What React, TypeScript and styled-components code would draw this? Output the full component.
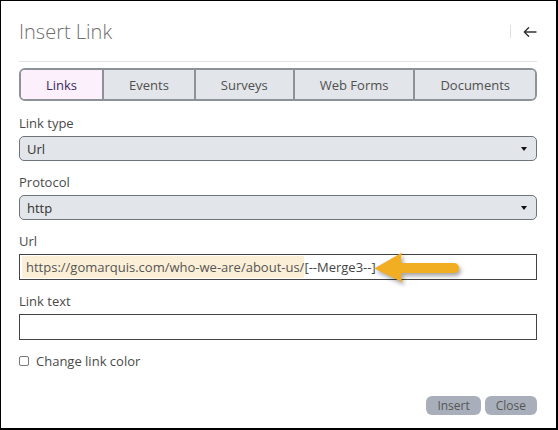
import React from "react";
import styled, { createGlobalStyle } from "styled-components";

const Global = createGlobalStyle`
  html, body { margin: 0; padding: 0; background: #fff; }
  body { font-family: "Open Sans", "Noto Sans", sans-serif; }
  * { box-sizing: border-box; }
`;

const Dialog = styled.div`
  width: 558px;
  height: 430px;
  border: 1px solid #000;
  border-right-width: 2px;
  border-bottom-width: 2px;
  padding: 0 19px 0 18px;
  display: flex;
  flex-direction: column;
  background: #fff;
`;

const Header = styled.div`
  display: flex;
  align-items: center;
  padding: 17px 0 16px;
  border-bottom: 1px solid #e3e3e3;
`;

const Title = styled.h1`
  margin: 0;
  font-size: 20px;
  line-height: 27px;
  font-weight: 300;
  color: #6f6f6f;
`;

const HeaderTools = styled.div`
  margin-left: auto;
  display: flex;
  align-items: center;
`;

const Divider = styled.span`
  width: 1px;
  height: 13px;
  background: #dcdfe5;
  margin-right: 12px;
`;

const BackButton = styled.button`
  border: 0;
  padding: 0;
  background: none;
  display: flex;
  cursor: pointer;
`;

const TabBar = styled.div`
  margin-top: 6px;
  height: 33px;
  display: flex;
  border: 2px solid #8d9299;
  border-radius: 6px;
  overflow: hidden;
`;

const Tab = styled.div<{ $active?: boolean }>`
  flex: 1 1 auto;
  display: flex;
  align-items: center;
  justify-content: center;
  font-size: 13px;
  color: ${(p) => (p.$active ? "#3a2b5c" : "#505050")};
  background: ${(p) => (p.$active ? "#fcf0fc" : "#e2e5e9")};
  & + & {
    border-left: 2px solid #8d9299;
  }
`;

const Field = styled.div<{ $first?: boolean }>`
  margin-top: ${(p) => (p.$first ? "13px" : "12px")};
  display: flex;
  flex-direction: column;
`;

const Label = styled.label`
  font-size: 13px;
  line-height: 18px;
  color: #4a4a4a;
  margin-bottom: 4px;
`;

const SelectBox = styled.div`
  height: 25px;
  border: 1px solid #6e747c;
  border-radius: 5px;
  background: #e2e5e9;
  display: flex;
  align-items: center;
  padding: 0 9px 0 7px;
  font-size: 13px;
  color: #333;
`;

const Caret = styled.span`
  margin-left: auto;
  width: 0;
  height: 0;
  border-left: 3px solid transparent;
  border-right: 3px solid transparent;
  border-top: 4px solid #111;
`;

const TextBox = styled.div`
  position: relative;
  height: 26px;
  border: 1px solid #444;
  display: flex;
  align-items: center;
  padding: 0 2px;
  font-size: 13px;
  color: #444;
  white-space: nowrap;
`;

const Highlight = styled.span`
  display: inline-block;
  height: 22px;
  line-height: 22px;
  padding: 0 0 0 4px;
  background: #fcefd7;
  color: #555;
`;

const MergeTag = styled.span`
  line-height: 22px;
  color: #444;
`;

const Annotation = styled.svg`
  position: absolute;
  left: 351px;
  top: -7px;
  filter: drop-shadow(2px 3px 2px rgba(0, 0, 0, 0.35));
  pointer-events: none;
`;

const CheckRow = styled.label`
  margin-top: 12px;
  display: flex;
  align-items: center;
  font-size: 13px;
  line-height: 18px;
  color: #4a4a4a;
`;

const CheckBox = styled.span`
  width: 10px;
  height: 10px;
  border: 1px solid #7a7a7a;
  border-radius: 2px;
  margin-right: 7px;
  background: #fff;
`;

const Footer = styled.div`
  margin-top: auto;
  padding-bottom: 13px;
  display: flex;
  justify-content: flex-end;
  gap: 4px;
`;

const Button = styled.button`
  height: 19px;
  border: 0;
  border-radius: 6px;
  background: #a8afba;
  color: #555;
  font-family: "Open Sans", "Noto Sans", sans-serif;
  font-size: 12px;
  padding: 0 11px;
  line-height: 19px;
  cursor: pointer;
`;

const tabs = ["Links", "Events", "Surveys", "Web Forms", "Documents"];

export default function App() {
  return (
    <>
      <Global />
      <Dialog>
        <Header>
          <Title>Insert Link</Title>
          <HeaderTools>
            <Divider />
            <BackButton aria-label="Back">
              <svg width="14" height="10" viewBox="0 0 14 10">
                <path
                  d="M13 5H1.3M5.6 0.8L1.3 5l4.3 4.2"
                  fill="none"
                  stroke="#333"
                  strokeWidth="1.4"
                  strokeLinecap="round"
                  strokeLinejoin="round"
                />
              </svg>
            </BackButton>
          </HeaderTools>
        </Header>

        <TabBar>
          {tabs.map((t, i) => (
            <Tab key={t} $active={i === 0}>
              {t}
            </Tab>
          ))}
        </TabBar>

        <Field $first>
          <Label>Link type</Label>
          <SelectBox>
            Url
            <Caret />
          </SelectBox>
        </Field>

        <Field>
          <Label>Protocol</Label>
          <SelectBox>
            http
            <Caret />
          </SelectBox>
        </Field>

        <Field>
          <Label>Url</Label>
          <TextBox>
            <Highlight>https://gomarquis.com/who-we-are/about-us/</Highlight>
            <MergeTag>[--Merge3--]</MergeTag>
            <Annotation width="92" height="42" viewBox="0 0 92 42">
              <path
                d="M3 20.5 L31 4.5 Q29 10 30.5 15 L83 15 A5 5 0 0 1 83 25 L30.5 25 Q29 30 32 34.5 Z"
                fill="#f2ae22"
              />
            </Annotation>
          </TextBox>
        </Field>

        <Field>
          <Label>Link text</Label>
          <TextBox />
        </Field>

        <CheckRow>
          <CheckBox />
          Change link color
        </CheckRow>

        <Footer>
          <Button>Insert</Button>
          <Button>Close</Button>
        </Footer>
      </Dialog>
    </>
  );
}
